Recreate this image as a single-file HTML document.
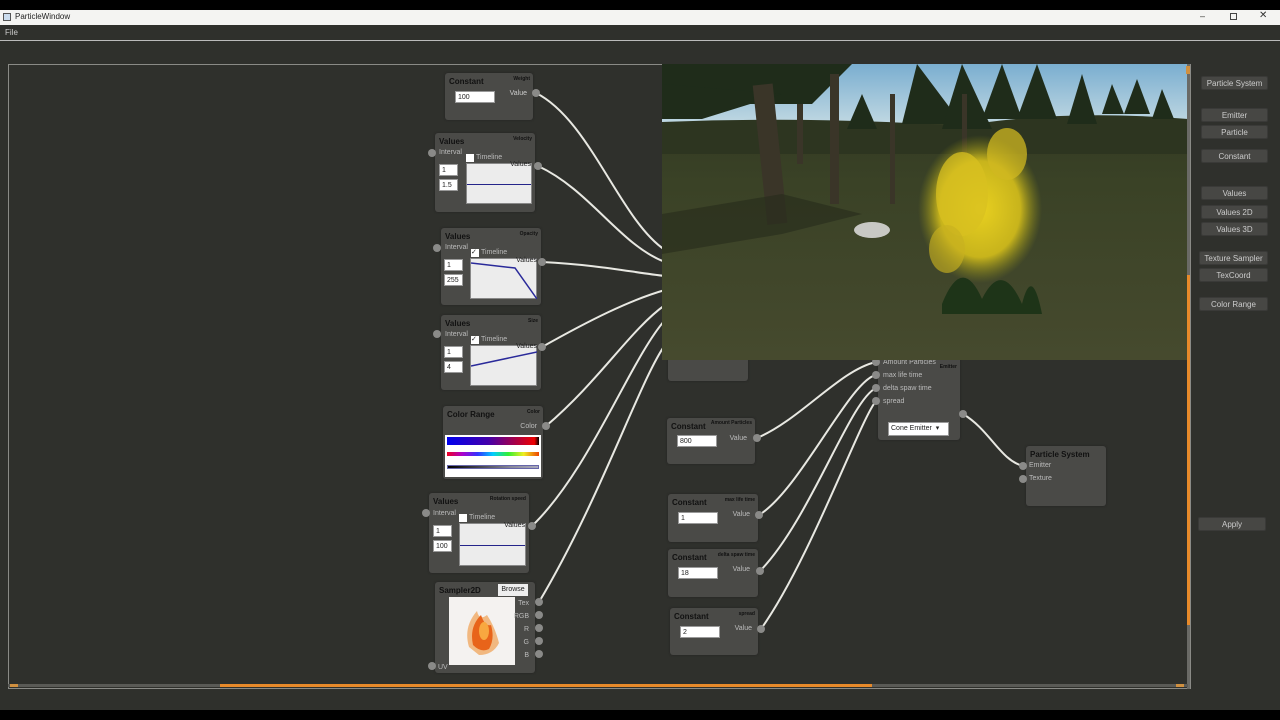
<!DOCTYPE html>
<html><head><meta charset="utf-8"><style>
*{margin:0;padding:0;box-sizing:border-box}
body{width:1280px;height:720px;background:#000;position:relative;overflow:hidden;font-family:"Liberation Sans",sans-serif;font-size:8px;color:#ddd}
.a{position:absolute}
.node{position:absolute;background:#4a4a47;border-radius:3px;box-shadow:0 0 2px #222}
.t{position:absolute;left:4px;top:4px;font-size:8px;font-weight:bold;color:#111}
.s{position:absolute;right:3px;top:3px;font-size:5px;font-weight:bold;color:#111}
.in{position:absolute;background:#fff;border:1px solid #999;font-size:7px;color:#222;padding-left:2px;line-height:11px;height:12px}
.g{position:absolute;background:#ececec;border:1px solid #888}
.p{position:absolute;width:8px;height:8px;border-radius:50%;background:#8a8a88}
.l{position:absolute;font-size:7px;color:#bbb}
.btn{position:absolute;background:#474744;border:1px solid #3a3a38;border-radius:2px;color:#ccc;font-size:8px;text-align:center;height:14px;line-height:13px}
</style></head><body>
<div class="a" style="left:0;top:10px;width:1280px;height:15px;background:#f4f4f2"></div>
<div class="a" style="left:3px;top:13px;width:8px;height:8px;border:1px solid #555;background:#cde"></div>
<div class="a" style="left:15px;top:12px;font-size:8px;color:#222">ParticleWindow</div>
<div class="a" style="left:1200px;top:11px;font-size:9px;color:#333">–</div>
<div class="a" style="left:1230px;top:13px;width:7px;height:7px;border:1px solid #444"></div>
<div class="a" style="left:1259px;top:10px;font-size:10px;color:#333">✕</div>
<div class="a" style="left:0;top:25px;width:1280px;height:685px;background:#2f302c"></div>
<div class="a" style="left:5px;top:28px;font-size:8px;color:#ccc">File</div>
<div class="a" style="left:0;top:40px;width:1280px;height:1px;background:#bbb"></div>
<div class="a" style="left:8px;top:64px;width:1183px;height:625px;border:1px solid #8a8a86;background:#2f302c"></div>
<svg class="a" style="left:0;top:0" width="1280" height="720">
<g fill="none" stroke="#e8e8e2" stroke-width="2">
<path d="M536 93 C590 120 620 220 665 250"/>
<path d="M538 166 C590 190 620 245 665 262"/>
<path d="M542 262 C600 265 630 272 665 276"/>
<path d="M542 347 C590 320 630 300 665 290"/>
<path d="M546 426 C600 380 630 330 665 305"/>
<path d="M532 526 C590 470 630 360 665 320"/>
<path d="M539 602 C600 500 640 380 665 345"/>
<path d="M757 438 C800 420 840 370 876 362"/>
<path d="M759 515 C800 490 850 380 876 375"/>
<path d="M760 571 C810 520 850 400 876 388"/>
<path d="M761 629 C810 560 860 420 876 401"/>
<path d="M963 414 C990 430 1000 460 1023 466"/>
</g></svg>
<div class="node" style="left:445px;top:73px;width:88px;height:47px"><div class="t">Constant</div><div class="s">Weight</div><div class="in" style="left:10px;top:18px;width:40px">100</div><div class="l" style="right:6px;top:17px;color:#ccc">Value</div></div>
<div class="p" style="left:532px;top:89px"></div>
<div class="node" style="left:435px;top:133px;width:100px;height:79px"><div class="t">Values</div><div class="s">Velocity</div><div class="l" style="left:4px;top:16px">Interval</div><div class="a" style="left:31px;top:21px;width:8px;height:8px;background:#fff"></div><div class="l" style="left:41px;top:21px">Timeline</div><div class="in" style="left:4px;top:31px;width:19px">1</div><div class="in" style="left:4px;top:46px;width:19px">1.5</div><div class="g" style="left:31px;top:30px;width:66px;height:41px"><div class="a" style="left:0;top:20px;width:64px;height:1px;background:#24248a"></div></div><div class="l" style="right:4px;top:28px;color:#222">Values</div></div>
<div class="p" style="left:428px;top:149px"></div><div class="p" style="left:534px;top:162px"></div>
<div class="node" style="left:441px;top:228px;width:100px;height:77px"><div class="t">Values</div><div class="s">Opacity</div><div class="l" style="left:4px;top:16px">Interval</div><div class="a" style="left:30px;top:21px;width:8px;height:8px;background:#fff;color:#222;font-size:7px;line-height:8px">✓</div><div class="l" style="left:40px;top:21px">Timeline</div><div class="in" style="left:3px;top:31px;width:19px">1</div><div class="in" style="left:3px;top:46px;width:19px">255</div><div class="g" style="left:29px;top:30px;width:67px;height:41px"><svg width="66" height="40" class="a"><path d="M0 4 L44 9 L66 40" stroke="#2a2a9a" stroke-width="1.5" fill="none"/></svg></div><div class="l" style="right:4px;top:29px;color:#222">Values</div></div>
<div class="p" style="left:433px;top:244px"></div><div class="p" style="left:538px;top:258px"></div>
<div class="node" style="left:441px;top:315px;width:100px;height:75px"><div class="t">Values</div><div class="s">Size</div><div class="l" style="left:4px;top:16px">Interval</div><div class="a" style="left:30px;top:21px;width:8px;height:8px;background:#fff;color:#222;font-size:7px;line-height:8px">✓</div><div class="l" style="left:40px;top:21px">Timeline</div><div class="in" style="left:3px;top:31px;width:19px">1</div><div class="in" style="left:3px;top:46px;width:19px">4</div><div class="g" style="left:29px;top:30px;width:67px;height:41px"><svg width="66" height="40" class="a"><path d="M0 20 L66 6" stroke="#2a2a9a" stroke-width="1.5" fill="none"/></svg></div><div class="l" style="right:4px;top:28px;color:#222">Values</div></div>
<div class="p" style="left:433px;top:330px"></div><div class="p" style="left:538px;top:343px"></div>
<div class="node" style="left:443px;top:406px;width:100px;height:73px"><div class="t">Color Range</div><div class="s">Color</div><div class="l" style="right:6px;top:17px">Color</div><div class="a" style="left:2px;top:29px;width:96px;height:42px;background:#fff"><div class="a" style="left:2px;top:2px;width:92px;height:8px;background:linear-gradient(90deg,#00e,#40a 45%,#c02 85%,#e00 95%,#000)"></div><div class="a" style="left:2px;top:17px;width:92px;height:4px;background:linear-gradient(90deg,#e02,#a0c,#33f,#0cf,#3e3,#ee2,#e40)"></div><div class="a" style="left:2px;top:30px;width:92px;height:4px;background:linear-gradient(90deg,#000,#889 70%,#aab);border:1px solid #66a"></div></div></div>
<div class="p" style="left:542px;top:422px"></div>
<div class="node" style="left:429px;top:493px;width:100px;height:80px"><div class="t">Values</div><div class="s">Rotation speed</div><div class="l" style="left:4px;top:17px">Interval</div><div class="a" style="left:30px;top:21px;width:8px;height:8px;background:#fff"></div><div class="l" style="left:40px;top:21px">Timeline</div><div class="in" style="left:4px;top:32px;width:19px">1</div><div class="in" style="left:4px;top:47px;width:19px">100</div><div class="g" style="left:30px;top:30px;width:67px;height:43px"><div class="a" style="left:0;top:21px;width:65px;height:1px;background:#24248a"></div></div><div class="l" style="right:4px;top:29px;color:#222">Values</div></div>
<div class="p" style="left:422px;top:509px"></div><div class="p" style="left:528px;top:522px"></div>
<div class="node" style="left:435px;top:582px;width:100px;height:91px"><div class="t">Sampler2D</div><div class="a" style="left:63px;top:2px;width:30px;height:12px;background:#eee;color:#222;font-size:7px;text-align:center;line-height:12px">Browse</div>
<div class="a" style="left:14px;top:15px;width:66px;height:68px;background:#f4f2f0;overflow:hidden"><svg width="66" height="68"><path d="M20 50 Q14 30 28 14 Q30 24 38 18 Q46 30 50 46 Q44 58 30 58Z" fill="#f0a050" opacity=".7"/><path d="M24 48 Q20 30 32 18 Q36 30 42 28 Q46 42 40 52 Q32 56 24 48Z" fill="#e8641a"/><ellipse cx="35" cy="34" rx="5" ry="9" fill="#f8a840"/></svg></div>
<div class="l" style="right:6px;top:18px">Tex</div><div class="l" style="right:6px;top:31px">RGB</div><div class="l" style="right:6px;top:44px">R</div><div class="l" style="right:6px;top:57px">G</div><div class="l" style="right:6px;top:70px">B</div><div class="l" style="left:3px;top:82px">UV</div></div>
<div class="p" style="left:535px;top:598px"></div><div class="p" style="left:535px;top:611px"></div><div class="p" style="left:535px;top:624px"></div><div class="p" style="left:535px;top:637px"></div><div class="p" style="left:535px;top:650px"></div><div class="p" style="left:428px;top:662px"></div>
<div class="node" style="left:668px;top:352px;width:80px;height:29px"></div>
<div class="node" style="left:878px;top:352px;width:82px;height:88px"><div class="l" style="left:5px;top:7px">Amount Particles</div><div class="l" style="left:5px;top:20px">max life time</div><div class="l" style="left:5px;top:33px">delta spaw time</div><div class="l" style="left:5px;top:46px">spread</div><div class="s" style="top:12px">Emitter</div><div class="in" style="left:10px;top:70px;width:61px;height:14px;line-height:12px">Cone Emitter &nbsp;▾</div></div>
<div class="p" style="left:872px;top:358px"></div><div class="p" style="left:872px;top:371px"></div><div class="p" style="left:872px;top:384px"></div><div class="p" style="left:872px;top:397px"></div><div class="p" style="left:959px;top:410px"></div>
<div class="node" style="left:667px;top:418px;width:88px;height:46px"><div class="t">Constant</div><div class="s" style="top:2px">Amount Particles</div><div class="in" style="left:10px;top:17px;width:40px">800</div><div class="l" style="right:8px;top:17px">Value</div></div>
<div class="p" style="left:753px;top:434px"></div>
<div class="node" style="left:668px;top:494px;width:90px;height:48px"><div class="t">Constant</div><div class="s">max life time</div><div class="in" style="left:10px;top:18px;width:40px">1</div><div class="l" style="right:8px;top:17px">Value</div></div>
<div class="p" style="left:755px;top:511px"></div>
<div class="node" style="left:668px;top:549px;width:90px;height:48px"><div class="t">Constant</div><div class="s">delta spaw time</div><div class="in" style="left:10px;top:18px;width:40px">18</div><div class="l" style="right:8px;top:17px">Value</div></div>
<div class="p" style="left:756px;top:567px"></div>
<div class="node" style="left:670px;top:608px;width:88px;height:47px"><div class="t">Constant</div><div class="s">spread</div><div class="in" style="left:10px;top:18px;width:40px">2</div><div class="l" style="right:6px;top:17px">Value</div></div>
<div class="p" style="left:757px;top:625px"></div>
<div class="node" style="left:1026px;top:446px;width:80px;height:60px"><div class="t" style="font-size:8px">Particle System</div><div class="l" style="left:3px;top:16px">Emitter</div><div class="l" style="left:3px;top:29px">Texture</div></div>
<div class="p" style="left:1019px;top:462px"></div><div class="p" style="left:1019px;top:475px"></div>
<svg class="a" style="left:662px;top:64px" width="526" height="296">
<defs><linearGradient id="sk" x1="0" y1="0" x2="0" y2="1"><stop offset="0" stop-color="#7aaed0"/><stop offset="1" stop-color="#c0d8e2"/></linearGradient>
<linearGradient id="gr" x1="0" y1="0" x2="0" y2="1"><stop offset="0" stop-color="#2c3320"/><stop offset=".4" stop-color="#3a4226"/><stop offset="1" stop-color="#464a2e"/></linearGradient>
<radialGradient id="fi"><stop offset="0" stop-color="#e8d020"/><stop offset=".65" stop-color="#c8b41c"/><stop offset="1" stop-color="#8a8a18" stop-opacity="0"/></radialGradient></defs>
<rect width="526" height="296" fill="url(#gr)"/>
<rect width="526" height="60" fill="url(#sk)"/>
<path d="M0 58 Q150 52 300 62 Q400 45 526 55 L526 90 L0 90Z" fill="#2d3520"/>
<g fill="#1f2c1a"><path d="M0 0 H190 L150 40 H0Z"/><path d="M0 20 L120 30 L40 55 L0 55Z"/><path d="M255 0 L300 60 L240 60Z"/><path d="M300 0 L330 65 L280 65Z"/><path d="M340 0 L360 55 L320 55Z"/><path d="M375 0 L395 55 L355 55Z"/><path d="M420 10 L435 60 L405 60Z"/><path d="M450 20 L462 50 L440 50Z"/><path d="M475 15 L488 50 L462 50Z"/><path d="M500 25 L512 55 L490 55Z"/><path d="M200 30 L215 65 L185 65Z"/></g>
<g fill="#3a3528"><rect x="98" y="20" width="20" height="140" transform="rotate(-6 110 90)"/><rect x="168" y="10" width="9" height="130"/><rect x="135" y="40" width="6" height="60"/><rect x="228" y="30" width="5" height="110"/><rect x="300" y="30" width="5" height="60"/></g>
<path d="M0 150 L120 130 L200 150 L120 170 L0 190Z" fill="#262c1a" opacity=".6"/>
<ellipse cx="210" cy="166" rx="18" ry="8" fill="#c8c8c4"/>
<ellipse cx="318" cy="145" rx="62" ry="74" fill="url(#fi)"/>
<ellipse cx="300" cy="130" rx="26" ry="42" fill="#d8c020" opacity=".75"/>
<ellipse cx="345" cy="90" rx="20" ry="26" fill="#d0b820" opacity=".75"/>
<ellipse cx="285" cy="185" rx="18" ry="24" fill="#c8b020" opacity=".65"/>
<path d="M280 240 Q300 190 320 235 Q340 195 360 240 Q370 200 380 250 L280 250Z" fill="#1e3418"/>
</svg>
<div class="a" style="left:1187px;top:64px;width:3px;height:625px;background:#6a6a66"></div>
<div class="a" style="left:1187px;top:275px;width:3px;height:350px;background:#e88a2a"></div>
<div class="a" style="left:1186px;top:66px;width:4px;height:8px;background:#d09040"></div>
<div class="a" style="left:8px;top:684px;width:1180px;height:3px;background:#5a5a56"></div>
<div class="a" style="left:220px;top:684px;width:652px;height:3px;background:#e88a2a"></div>
<div class="a" style="left:10px;top:684px;width:8px;height:3px;background:#d09040"></div>
<div class="a" style="left:1176px;top:684px;width:8px;height:3px;background:#d09040"></div>
<div class="btn" style="left:1201px;top:76px;width:67px">Particle System</div>
<div class="btn" style="left:1201px;top:108px;width:67px">Emitter</div>
<div class="btn" style="left:1201px;top:125px;width:67px">Particle</div>
<div class="btn" style="left:1201px;top:149px;width:67px">Constant</div>
<div class="btn" style="left:1201px;top:186px;width:67px">Values</div>
<div class="btn" style="left:1201px;top:205px;width:67px">Values 2D</div>
<div class="btn" style="left:1201px;top:222px;width:67px">Values 3D</div>
<div class="btn" style="left:1199px;top:251px;width:69px">Texture Sampler</div>
<div class="btn" style="left:1199px;top:268px;width:69px">TexCoord</div>
<div class="btn" style="left:1199px;top:297px;width:69px">Color Range</div>
<div class="btn" style="left:1198px;top:517px;width:68px">Apply</div>
</body></html>
